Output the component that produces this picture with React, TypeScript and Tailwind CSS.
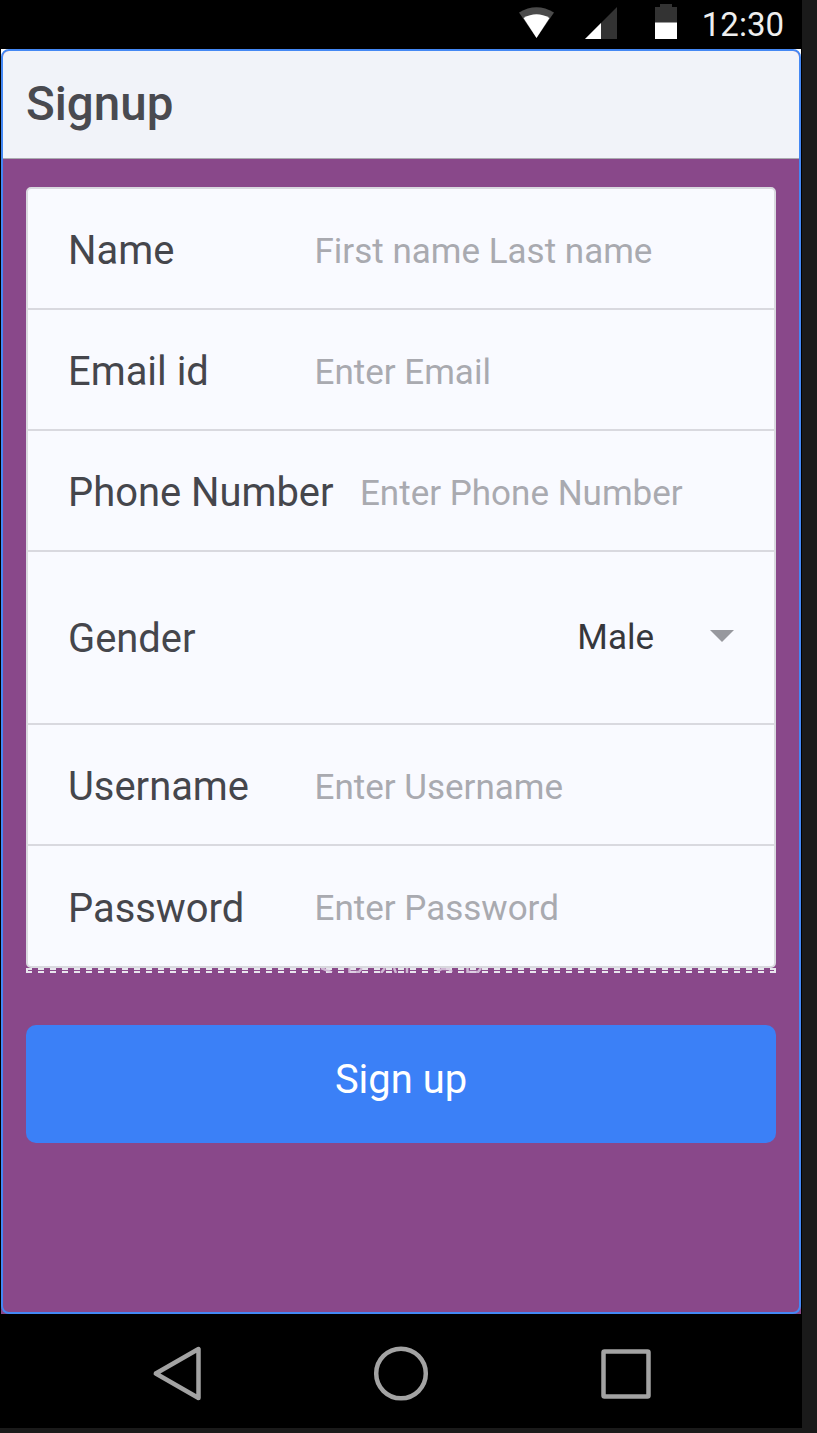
import React from "react";

const fields = [
  { label: "Name", hint: "First name Last name" },
  { label: "Email id", hint: "Enter Email" },
  { label: "Phone Number", hint: "Enter Phone Number" },
  { label: "Gender", value: "Male" },
  { label: "Username", hint: "Enter Username" },
  { label: "Password", hint: "Enter Password" },
];

function StatusBar() {
  return (
    <div className="flex h-[49px] shrink-0 items-start justify-end">
      <svg width="180" height="49" viewBox="518 0 180 49">
        <path d="M519 12.5Q536.500 2 554 12.500L536.500 38Z" fill="#4b4b4b" />
        <path d="M523.500 18Q536.500 10.500 549.500 18L536.500 38Z" fill="#fff" />
        <path d="M585 39L617 7V39Z" fill="#333" />
        <path d="M585 39L601 23V39Z" fill="#fff" />
        <path d="M655 7H660V4H672V7H677V23H655Z" fill="#333" />
        <path d="M655 22.500H677V39H655Z" fill="#fff" />
      </svg>
      <span className="mr-[18px] pl-[4px] pt-[8px] text-[33px] leading-[34px] text-[#eee]">12:30</span>
    </div>
  );
}

function NavBar() {
  return (
    <div className="h-[114px] shrink-0">
      <svg width="802" height="114" viewBox="0 1314 802 114" fill="none" stroke="#a3a3a3" strokeWidth="4.500" strokeLinejoin="round">
        <path d="M155.800 1373.500L198.500 1349V1398Z" />
        <circle cx="401" cy="1373.500" r="24.800" />
        <rect x="603.500" y="1351.500" width="45" height="45" rx="1" />
      </svg>
    </div>
  );
}

export default function App() {
  return (
    <div className="h-[1433px] w-[817px] bg-[#1a1a1a] font-['Roboto',sans-serif]">
      <div className="flex h-[1428px] w-[802px] flex-col bg-black">
        <StatusBar />
        <div className="mx-px h-[1265px] bg-[linear-gradient(#fff_50%,#89488a_50%)]">
          <div className="flex h-full flex-col overflow-hidden rounded-lg border-2 border-[#4488f4] bg-[#89488a]">
            <header className="h-[108px] shrink-0 border-b border-[#aaaab0] bg-[#f1f3f9] pl-[23px] pt-[25px]">
              <h1 className="text-[47.5px] font-medium leading-[56px] text-[#494a50]">Signup</h1>
            </header>
            <main className="px-[23px] pt-[28px]">
              <div className="rounded-[5px] border-2 border-[#d9d9df] bg-[#f9faff]">
                {fields.map((f, i) => (
                  <div
                    key={f.label}
                    className={`flex items-center pl-[40px] ${f.value ? "h-[173px]" : "h-[121px] pt-[3px]"} ${i < 5 ? "border-b-2 border-[#d9d9df]" : "!h-[120px]"}`}
                  >
                    <span className="min-w-[220px] pt-[2px] text-[39.9px] leading-[46px] text-[#45464c]">{f.label}</span>
                    {f.value ? (
                      <span className="ml-auto mr-[40px] flex items-center text-[35px] leading-[42px] text-[#36373c]">
                        {f.value}
                        <svg className="mb-[4px] ml-[56px]" width="24" height="12">
                          <path d="M0 0H24L12 12Z" fill="#97989e" />
                        </svg>
                      </span>
                    ) : (
                      <span className="ml-[26.5px] pt-[3px] text-[35px] leading-[42px] text-[#a9aab0]">{f.hint}</span>
                    )}
                  </div>
                ))}
              </div>
              <div className="h-[5px]">
                <svg className="block" width="750" height="5">
                  <path d="M0 1H750M0 4H750" stroke="#e8e6ee" strokeWidth="2" strokeDasharray="6 6" />
                  <path d="M1 0V5M749 0V5" stroke="#e8e6ee" strokeWidth="2" />
                  <path
                    d="M295 0L306 4.500M323.500 0V4H333L336 0M355 5L359 0M368 0L370 5M381 0V5M411 3.500L416 1H423L426 4M441.500 0V4H452L455 0"
                    fill="none"
                    stroke="#dccbe0"
                    strokeWidth="2.500"
                    opacity="0.85"
                  />
                </svg>
              </div>
              <button className="mt-[52px] block h-[118px] w-full rounded-[10px] bg-[#3b80f7] pb-[8px] text-[39.9px] leading-[46px] text-white">
                Sign up
              </button>
            </main>
          </div>
        </div>
        <NavBar />
      </div>
    </div>
  );
}
